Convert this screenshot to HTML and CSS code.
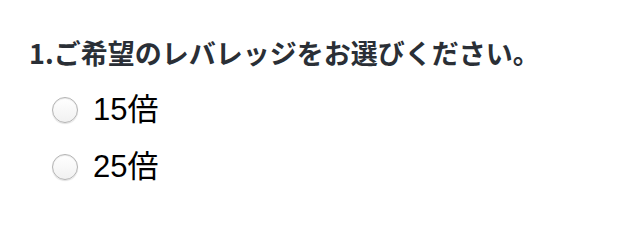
FILE: index.html
```html
<!DOCTYPE html>
<html lang="ja">
<head>
<meta charset="utf-8">
<link rel="stylesheet" href="styles.css">
</head>
<body>
<div class="question">
  <h2 class="q-title">1.ご希望のレバレッジをお選びください。</h2>
  <ul class="options">
    <li class="option"><span class="radio"></span><span class="label">15倍</span></li>
    <li class="option"><span class="radio"></span><span class="label">25倍</span></li>
  </ul>
</div>
</body>
</html>
```
FILE: styles.css
```css
html, body {
  margin: 0;
  padding: 0;
  background: #ffffff;
}
.question {
  padding: 35px 0 0 29px;
}
.q-title {
  margin: 0;
  font-family: "Noto Sans CJK JP", "Liberation Sans", sans-serif;
  font-weight: 700;
  font-size: 27px;
  line-height: 36px;
  color: #2a2f36;
}
.options {
  list-style: none;
  margin: 0;
  padding: 21px 0 0 23px;
  display: flex;
  flex-direction: column;
  gap: 21px;
}
.option {
  display: flex;
  align-items: center;
  gap: 15px;
  height: 36px;
}
.radio {
  width: 26px;
  height: 26px;
  box-sizing: border-box;
  border-radius: 50%;
  border: 1px solid #b3b3b3;
  background: linear-gradient(#ffffff, #f1f1f1);
  box-shadow: inset 0 1px 1px rgba(0,0,0,0.08), 0 1px 1px rgba(0,0,0,0.12);
}
.label {
  font-family: "Liberation Sans", "Noto Sans CJK JP", sans-serif;
  font-size: 31px;
  color: #000;
  line-height: 36px;
}
```
